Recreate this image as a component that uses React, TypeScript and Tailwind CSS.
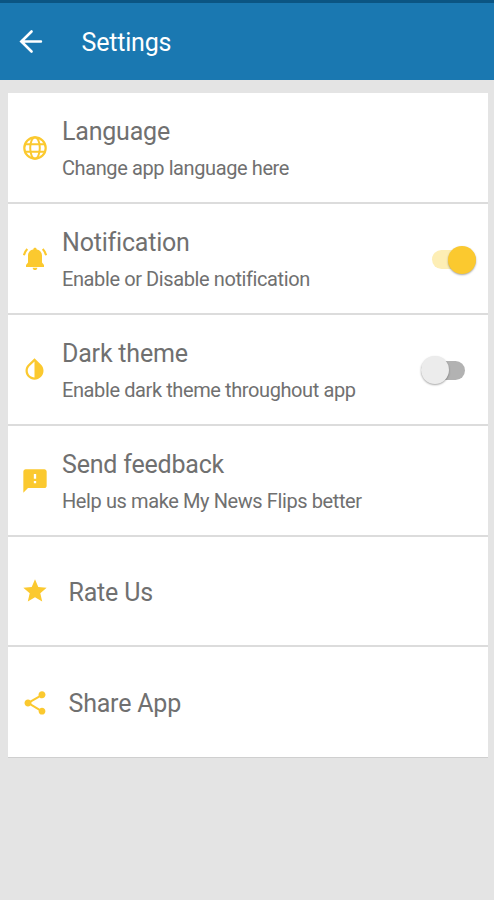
import React, { useState } from 'react';
import { MdFeedback, MdInvertColors, MdShare, MdStar } from 'react-icons/md';

interface IconProps {
  className?: string;
}

interface RowProps {
  icon: React.ComponentType<IconProps>;
  title: string;
  subtitle?: string;
  iconClass?: string;
  children?: React.ReactNode;
}

const BackIcon = ({ className }: IconProps) => (
  <svg viewBox="0 0 24 24" className={className} fill="none" stroke="currentColor" strokeWidth="2.500" strokeLinecap="round">
    <path d="M13 2.400L3.200 12L13 21.600M3.600 12H22" />
  </svg>
);

const GlobeIcon = ({ className }: IconProps) => (
  <svg viewBox="0 0 24 24" className={className} fill="none" stroke="currentColor" strokeWidth="2">
    <circle cx="12" cy="12" r="10.700" strokeWidth="2.200" />
    <ellipse cx="12" cy="12" rx="4.800" ry="10.700" />
    <path d="M2.500 8.200h19M2.500 15.800h19" />
  </svg>
);

const BellIcon = ({ className }: IconProps) => (
  <svg viewBox="0 0 24 24" className={className} fill="currentColor">
    <path d="M12 .8c-1 0-1.700.7-1.700 1.600C6.600 3.100 5 5.600 5 8.700V15.500L3 18V19.900H21V18L19 15.500V8.700C19 5.600 17.400 3.100 13.700 2.400 13.700 1.500 13 .8 12 .8Z" />
    <path d="M9.700 20.800h4.600c0 1.400-1 2.300-2.300 2.300S9.700 22.200 9.700 20.800Z" />
    <path
      d="M4.300 2C2.600 3.700 1.500 5.700.9 8.300M19.700 2C21.400 3.700 22.500 5.700 23.100 8.300"
      fill="none"
      stroke="currentColor"
      strokeWidth="2.100"
    />
  </svg>
);

const SettingRow: React.FC<RowProps> = ({ icon: Icon, title, subtitle, iconClass = 'h-7 w-7', children }) => (
  <div className="flex h-[110.8px] items-center border-b-2 border-[#dcdcdc] pt-px pl-[13px] last:border-b last:border-[#cfcfcf]">
    <div className="flex w-7 shrink-0 justify-center">
      <Icon className={`text-[#fbc92f] ${iconClass}`} />
    </div>
    {subtitle ? (
      <div className="ml-[13.5px] flex-1 pt-[4px] whitespace-nowrap">
        <div className="text-[25px] leading-9 tracking-[-0.2px] text-[#707070]">{title}</div>
        <div className="text-[20px] leading-9 tracking-[-0.4px] text-[#707070]">{subtitle}</div>
      </div>
    ) : (
      <div className="ml-[20px] flex-1 pt-[3px] text-[25px] leading-9 tracking-[-0.2px] text-[#707070]">{title}</div>
    )}
    {children}
  </div>
);

const Toggle = ({ on, onClick }: { on: boolean; onClick: () => void }) => (
  <button
    onClick={onClick}
    className={`mt-px flex h-[19px] w-[44px] shrink-0 items-center rounded-full ${
      on ? 'mr-[12px] justify-end bg-[#fdeeb5]' : 'mr-[23px] bg-[#b2b2b2]'
    }`}
  >
    <span className={`h-7 w-7 shrink-0 rounded-full shadow-[0_1px_2px_rgba(0,0,0,0.35)] ${on ? 'bg-[#fbc92f]' : 'bg-[#ececec]'}`} />
  </button>
);

const App: React.FC = () => {
  const [notifications, setNotifications] = useState(true);
  const [darkTheme, setDarkTheme] = useState(false);

  return (
    <div className="min-h-screen bg-[#e4e4e4] font-[Roboto,sans-serif]">
      <header className="flex h-20 items-center border-t-[3px] border-[#0b5583] bg-[#1a78b1] pl-[18px] text-white">
        <BackIcon className="h-[25px] w-[25px]" />
        <h1 className="ml-[38.5px] pt-[2px] text-[25px] tracking-[-0.2px]">Settings</h1>
      </header>

      <main className="mt-[13.4px] ml-[7.5px] w-[480.5px] bg-white">
        <SettingRow icon={GlobeIcon} iconClass="h-6 w-6" title="Language" subtitle="Change app language here" />
        <SettingRow icon={BellIcon} iconClass="h-6 w-6" title="Notification" subtitle="Enable or Disable notification">
          <Toggle on={notifications} onClick={() => setNotifications(!notifications)} />
        </SettingRow>
        <SettingRow icon={MdInvertColors} iconClass="h-[27px] w-[27px]" title="Dark theme" subtitle="Enable dark theme throughout app">
          <Toggle on={darkTheme} onClick={() => setDarkTheme(!darkTheme)} />
        </SettingRow>
        <SettingRow icon={MdFeedback} title="Send feedback" subtitle="Help us make My News Flips better" />
        <SettingRow icon={MdStar} title="Rate Us" />
        <SettingRow icon={MdShare} title="Share App" />
      </main>
    </div>
  );
};

export default App;
